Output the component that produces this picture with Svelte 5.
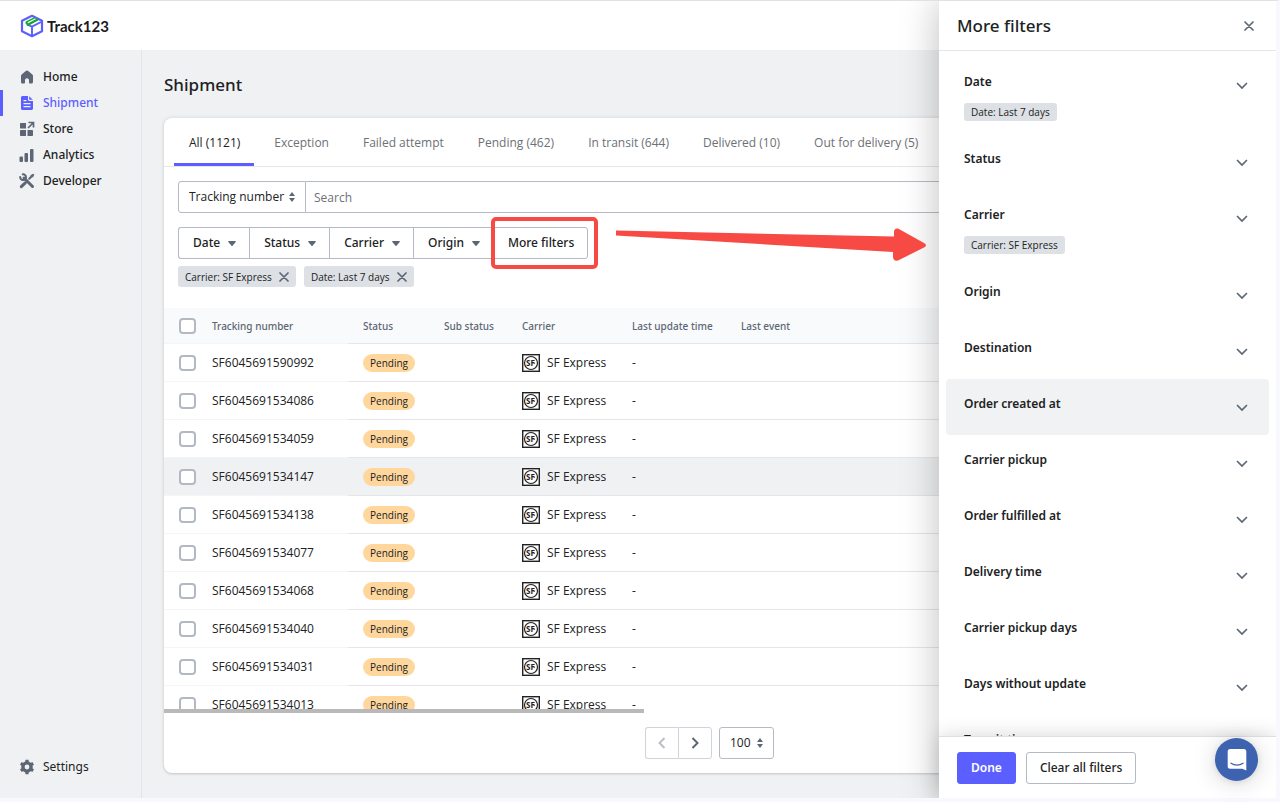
<script lang="ts">
	const nav = ["Home", "Shipment", "Store", "Analytics", "Developer"];
	const tabs = [
		"All (1121)",
		"Exception",
		"Failed attempt",
		"Pending (462)",
		"In transit (644)",
		"Delivered (10)",
		"Out for delivery (5)"
	];
	const filters = ["Date", "Status", "Carrier", "Origin"];
	const columns = ["Status", "Sub status", "Carrier", "Last update time", "Last event"];
	const numbers = [
		"SF6045691590992",
		"SF6045691534086",
		"SF6045691534059",
		"SF6045691534147",
		"SF6045691534138",
		"SF6045691534077",
		"SF6045691534068",
		"SF6045691534040",
		"SF6045691534031",
		"SF6045691534013"
	];
	const groups = [
		{ name: "Date", value: "Date: Last 7 days" },
		{ name: "Status" },
		{ name: "Carrier", value: "Carrier: SF Express" },
		{ name: "Origin" },
		{ name: "Destination" },
		{ name: "Order created at" },
		{ name: "Carrier pickup" },
		{ name: "Order fulfilled at" },
		{ name: "Delivery time" },
		{ name: "Carrier pickup days" },
		{ name: "Days without update" },
		{ name: "Transit time" }
	];

	let page = $state("Shipment");
	let tab = $state("All (1121)");
	let search = $state("");
	let chips = $state(["Carrier: SF Express", "Date: Last 7 days"]);
	let checked: string[] = $state([]);
	let hovered = $state("SF6045691534147");
	let group = $state("Order created at");
</script>

{#snippet sorter()}
	<svg class="sorter" width="6" height="10" viewBox="0 0 6 10"><path d="M3 0 6 4H0zM3 10 0 6h6z" /></svg>
{/snippet}

{#snippet cross()}
	<svg width="10" height="10" viewBox="0 0 10 10" fill="none" stroke="#5c6675" stroke-width="1.7" stroke-linecap="round">
		<path d="M1 1l8 8M9 1 1 9" />
	</svg>
{/snippet}

<div class="app">
	<header class="topbar">
		<a class="logo" href="#home">
			<svg width="24" height="24" viewBox="0 0 24 24" fill="none" stroke-linejoin="round">
				<path d="M12 1.800 22 6.800v10.400l-10 5-10-5V6.800z" stroke="#5c5fff" stroke-width="2.200" />
				<path d="M7 10.500l5 2.200 9-4.700M12 12.700v9" stroke="#5c5fff" stroke-width="1.900" />
				<path d="M6 8.200 8 10.800 18 5.200" stroke="#14a82c" stroke-width="2.200" />
				<path d="M6 8.200 14.500 3.800" stroke="#14a82c" stroke-width="1.500" />
			</svg>
			<span>Track123</span>
		</a>
	</header>

	<div class="body">
		<nav class="sidebar">
			{#each nav as item}
				<a href="#{item.toLowerCase()}" class:active={page === item} onclick={() => (page = item)}>
					<svg width="16" height="16" viewBox="0 0 16 16" fill="currentColor">
						{#if item === "Home"}
							<path d="M8 1.500c-.5 0-.9.2-1.200.5L2.600 5.600c-.4.4-.6.9-.6 1.400v6c0 .8.6 1.500 1.400 1.500h1.800c.5 0 .8-.4.8-.9v-2.400C6 10 6.900 9.200 8 9.200s2 .8 2 2v2.400c0 .5.3.9.8.9h1.800c.8 0 1.400-.7 1.400-1.500V7c0-.5-.2-1-.6-1.400L9.200 2c-.3-.3-.7-.5-1.200-.5z" />
						{:else if item === "Shipment"}
							<path fill-rule="evenodd" d="M3.500 1H9v3.500C9 5.300 9.700 6 10.500 6H14v7.500c0 .8-.7 1.500-1.500 1.500h-9C2.700 15 2 14.300 2 13.500v-11C2 1.700 2.700 1 3.500 1zM4.500 5v1.300h3V5zm0 3v1.300h7V8zm0 3v1.300h7V11z" />
							<path d="M10.200 1.200 13.800 4.800h-3c-.4 0-.6-.2-.6-.6z" />
						{:else if item === "Store"}
							<path d="M2 2h5v5.500H2c-.6 0-1-.4-1-1V3c0-.6.4-1 1-1zM2 9h5v6H2c-.6 0-1-.4-1-1v-4c0-.6.4-1 1-1zM8.500 9H13c.6 0 1 .4 1 1v4c0 .6-.4 1-1 1H8.500z" />
							<path d="M9 7l5-5M9.500 1.500h5V6.500" fill="none" stroke="currentColor" stroke-width="1.700" />
						{:else if item === "Analytics"}
							<rect x="0.500" y="9.500" width="3.500" height="5.500" rx="1" />
							<rect x="5.500" y="6" width="3.500" height="9" rx="1" />
							<rect x="11" y="2" width="3.500" height="13" rx="1" />
						{:else}
							<g fill="none" stroke="currentColor" stroke-linecap="round">
								<path d="M5 5l8.500 8.500" stroke-width="3" />
								<path d="M2.300 13.700 6.300 9.900" stroke-width="3" />
								<path d="M10.200 5.800 13.300 2.700" stroke-width="2" />
								<path d="M12.200 2.300 14.400 1.200l.4.4-1.100 2.200z" stroke-width="1" fill="currentColor" />
								<path d="M3.800 1.300A2.900 2.900 0 1 1 1.200 3.900" stroke-width="2" />
							</g>
						{/if}
					</svg>
					{item}
				</a>
			{/each}
			<a href="#settings" class="settings">
				<svg width="16" height="16" viewBox="0 0 16 16" fill="none" stroke="currentColor">
					<circle cx="8" cy="8" r="4.100" stroke-width="3.400" />
					<path stroke-width="3.200" d="M8 .8v2.500M8 12.700v2.500M1.800 4.400 4 5.700M12 10.300l2.200 1.300M1.800 11.600 4 10.300M12 5.700l2.200-1.300" />
				</svg>
				Settings
			</a>
		</nav>

		<main>
			<h1>Shipment</h1>
			<section class="card">
				<div class="tabs" role="tablist">
					{#each tabs as item}
						<button role="tab" aria-selected={tab === item} class:active={tab === item} onclick={() => (tab = item)}>
							{item}
						</button>
					{/each}
				</div>

				<div class="tools">
					<div class="search">
						<div class="select">
							<select aria-label="Search by">
								<option>Tracking number</option>
							</select>
							{@render sorter()}
						</div>
						<input type="text" aria-label="Search" placeholder="Search" bind:value={search} />
					</div>

					<div class="filters">
						{#each filters as item}
							<button>
								{item}
								<svg width="8" height="5" viewBox="0 0 8 5"><path d="M.8 0h6.400c.6 0 .9.6.5 1L4.500 4.700a.7.7 0 0 1-1 0L.3 1C-.1.6.2 0 .8 0z" fill="#5c6675" /></svg>
							</button>
						{/each}
						<div class="more">
							<button>More filters</button>
							<span class="callout"></span>
							<svg class="arrow" width="312" height="36" viewBox="0 0 312 36">
								<path d="M1 2.500 279 8.500V4q0-4 4-3.500L309 15q4 2 0 4.500L283 32.500q-5 1-5-4V24L1 7.500z" fill="#f84a45" />
							</svg>
						</div>
					</div>

					<div class="chips">
						{#each chips as chip}
							<span class="chip">
								{chip}
								<button aria-label="Remove {chip}" onclick={() => (chips = chips.filter((c) => c !== chip))}>
									{@render cross()}
								</button>
							</span>
						{/each}
					</div>
				</div>

				<div class="table-wrap">
					<table>
						<colgroup>
							<col class="c-check" />
							<col class="c-number" />
							<col class="c-status" />
							<col class="c-sub" />
							<col class="c-carrier" />
							<col class="c-time" />
							<col />
						</colgroup>
						<thead>
							<tr>
								<th><input type="checkbox" aria-label="Select all" /></th>
								<th>Tracking number</th>
								{#each columns as column}
									<th>{column}</th>
								{/each}
							</tr>
						</thead>
						<tbody>
							{#each numbers as number}
								<tr class:hovered={hovered === number} onmouseenter={() => (hovered = number)}>
									<td><input type="checkbox" aria-label="Select {number}" value={number} bind:group={checked} /></td>
									<td>{number}</td>
									<td><span class="badge">Pending</span></td>
									<td></td>
									<td>
										<div class="carrier">
											<svg width="18" height="18" viewBox="0 0 18 18">
												<rect x="0.700" y="0.700" width="16.600" height="16.600" fill="#fff" stroke="#222" stroke-width="1.400" />
												<circle cx="9" cy="9" r="6.500" fill="none" stroke="#222" stroke-width="1.200" />
												<text x="8.500" y="12" text-anchor="middle" font-size="8" font-weight="700" fill="#222">SF</text>
												<path d="M11.500 9.500h1.500" stroke="#e33" stroke-width="1.200" />
											</svg>
											SF Express
										</div>
									</td>
									<td>-</td>
									<td></td>
								</tr>
							{/each}
						</tbody>
					</table>
					<div class="scrollbar"></div>
				</div>

				<div class="pagination">
					<div class="pager">
						<button aria-label="Previous page" disabled>
							<svg width="8" height="12" viewBox="0 0 8 12"><path d="M6.500 1 1.500 6l5 5" /></svg>
						</button>
						<button aria-label="Next page">
							<svg width="8" height="12" viewBox="0 0 8 12"><path d="M1.500 1l5 5-5 5" /></svg>
						</button>
					</div>
					<div class="select size">
						<select aria-label="Rows per page">
							<option>100</option>
						</select>
						{@render sorter()}
					</div>
				</div>
			</section>
		</main>
	</div>

	<aside class="drawer">
		<div class="drawer-head">
			<h2>More filters</h2>
			<button aria-label="Close">{@render cross()}</button>
		</div>
		<div class="groups">
			{#each groups as item}
				<button class="group" class:current={group === item.name} onmouseenter={() => (group = item.name)}>
					<span>
						<span class="name">{item.name}</span>
						{#if item.value}
							<span class="tag">{item.value}</span>
						{/if}
					</span>
					<svg width="12" height="8" viewBox="0 0 12 8"><path d="M1.500 1.500 6 6l4.500-4.500" /></svg>
				</button>
			{/each}
		</div>
		<div class="drawer-foot">
			<button class="done">Done</button>
			<button class="clear">Clear all filters</button>
		</div>
	</aside>

	<button class="chat" aria-label="Open chat">
		<svg width="20" height="22" viewBox="0 0 20 22">
			<path d="M3 0h14c1.300 0 2.300 1 2.300 2.300V21.500l-4-1.700H3c-1.300 0-2.300-1-2.300-2.300V2.300C.7 1 1.700 0 3 0z" fill="#fff" />
			<path d="M4 14.200c3.500 2.600 8.500 2.600 12 0" fill="none" stroke="#3d63b0" stroke-width="1.300" stroke-linecap="round" />
		</svg>
	</button>
</div>

<style>
	:global(body) {
		margin: 0;
		background: #f8f9ff;
		overflow: hidden;
	}

	* {
		box-sizing: border-box;
	}

	.app {
		position: relative;
		display: flex;
		flex-direction: column;
		height: 100vh;
		border-top: 1px solid #dfe0e8;
		border-right: 4px solid #f8f9ff;
		border-bottom: 4px solid #f8f9ff;
		background: #f0f1f3;
		color: #202223;
		font-family: "Open Sans", "Noto Sans", sans-serif;
		font-size: 12px;
		line-height: 18px;
	}

	button,
	input,
	select {
		font: inherit;
		color: inherit;
		margin: 0;
	}

	button {
		border: 0;
		padding: 0;
		background: none;
		white-space: nowrap;
		cursor: pointer;
	}

	svg {
		display: block;
		flex: none;
	}

	/* Noto Sans has the medium cut that Open Sans lacks */
	h1,
	h2,
	.sidebar,
	.filters button,
	.name,
	.drawer-foot button {
		font-family: "Noto Sans", "Open Sans", sans-serif;
	}

	.topbar {
		display: flex;
		align-items: center;
		flex: none;
		height: 49px;
		padding-left: 20px;
		background: #fff;
	}

	.logo {
		display: flex;
		align-items: center;
		gap: 3px;
		color: #1c1c1c;
		font-family: Lato, sans-serif;
		font-size: 15px;
		font-weight: 700;
		text-decoration: none;
	}

	.body {
		display: flex;
		flex: 1;
		min-height: 0;
	}

	.sidebar {
		display: flex;
		flex-direction: column;
		flex: none;
		width: 142px;
		padding: 14px 0 18px;
		border-right: 1px solid #e2e5e9;
	}

	.sidebar a {
		display: flex;
		align-items: center;
		gap: 8px;
		height: 26px;
		padding-left: 16px;
		border-left: 3px solid transparent;
		color: #202223;
		font-weight: 500;
		text-decoration: none;
	}

	.sidebar a svg {
		color: #5c6675;
	}

	.sidebar a.active {
		border-color: #5c5fff;
		color: #5c5fff;
	}

	.sidebar a.active svg {
		color: #5c5fff;
	}

	.sidebar .settings {
		margin-top: auto;
		font-weight: 400;
	}

	main {
		display: flex;
		flex-direction: column;
		flex: 1;
		min-width: 0;
		padding: 23px 21px 25px 22px;
	}

	h1,
	h2 {
		margin: 0;
		font-size: 17px;
		font-weight: 500;
		line-height: 24px;
	}

	h1 {
		margin-bottom: 21px;
	}

	.card {
		display: flex;
		flex-direction: column;
		flex: 1;
		min-height: 0;
		border-radius: 8px;
		background: #fff;
		box-shadow: 0 0 4px rgba(23, 24, 24, 0.12), 0 1px 2px rgba(0, 0, 0, 0.12);
	}

	.tabs {
		display: flex;
		gap: 5px;
		flex: none;
		height: 49px;
		padding: 0 10px;
		border-bottom: 1px solid #e6e7ea;
	}

	.tabs button {
		padding: 5px 14px 0 15px;
		border-bottom: 3px solid transparent;
		color: #6d7175;
	}

	.tabs button.active {
		border-color: #5c5fff;
		color: #202223;
	}

	.tools {
		display: flex;
		flex-direction: column;
		flex: none;
		padding: 14px 14px 21px;
	}

	.search {
		display: flex;
		margin-bottom: 14px;
	}

	.select {
		position: relative;
		display: flex;
		align-items: center;
	}

	.select select {
		appearance: none;
		height: 32px;
		padding: 0 20px 0 10px;
		border: 1px solid #b5bbc5;
		border-radius: 3px 0 0 3px;
		background: #fff;
	}

	.sorter {
		position: absolute;
		right: 11px;
		fill: #5c6675;
		pointer-events: none;
	}

	.search input {
		flex: 1;
		height: 32px;
		padding: 0 8px;
		border: 1px solid #b5bbc5;
		border-left: 0;
		border-radius: 0 3px 3px 0;
	}

	.search input::placeholder {
		color: #6d7175;
		opacity: 1;
	}

	.filters {
		display: flex;
		margin-bottom: 7px;
	}

	.filters button {
		display: flex;
		align-items: center;
		gap: 8px;
		height: 32px;
		padding: 0 13px 0 14px;
		border: 1px solid #b5bbc5;
		border-right: 0;
		background: #fff;
		font-weight: 500;
	}

	.filters > button:first-child {
		border-radius: 3px 0 0 3px;
	}

	.more {
		position: relative;
	}

	.filters .more button {
		border-right: 1px solid #b5bbc5;
		border-radius: 0 3px 3px 0;
	}

	.callout {
		position: absolute;
		inset: -10px -10px -10px -2px;
		border: 4px solid #f84a45;
		border-radius: 5px;
		pointer-events: none;
	}

	.arrow {
		position: absolute;
		left: 122px;
		top: 1px;
		z-index: 3;
		pointer-events: none;
	}

	.chips {
		display: flex;
		gap: 8px;
	}

	.chip {
		display: flex;
		align-items: center;
		gap: 7px;
		height: 21px;
		padding: 0 7px;
		border-radius: 3px;
		background: #dde0e4;
		font-size: 10px;
	}

	.table-wrap {
		position: relative;
		flex: 1;
		min-height: 0;
		overflow: hidden;
	}

	table {
		width: 100%;
		table-layout: fixed;
		border-collapse: separate;
		border-spacing: 0;
	}

	.c-check {
		width: 33px;
	}

	.c-number {
		width: 151px;
	}

	.c-status {
		width: 81px;
	}

	.c-sub {
		width: 78px;
	}

	.c-carrier {
		width: 110px;
	}

	.c-time {
		width: 109px;
	}

	th,
	td {
		height: 38px;
		padding: 0 0 0 15px;
		border-bottom: 1px solid #e4e6e9;
		text-align: left;
		white-space: nowrap;
	}

	th {
		height: 36px;
		background: #f9fafb;
		color: #5c6675;
		font-family: "Noto Sans", "Open Sans", sans-serif;
		font-size: 10px;
		font-weight: 500;
	}

	th:nth-child(-n + 2),
	td:nth-child(-n + 2) {
		border-color: #f4f5f6;
	}

	tr.hovered td {
		background: #f0f1f3;
	}

	input[type="checkbox"] {
		appearance: none;
		display: block;
		width: 17px;
		height: 16px;
		border: 2px solid #b3b9c4;
		border-radius: 4px;
		background: #fff;
	}

	input[type="checkbox"]:checked {
		background: #5c5fff;
	}

	.badge {
		display: block;
		width: fit-content;
		padding: 0 7px;
		border-radius: 9px;
		background: #ffd79d;
		font-size: 10px;
	}

	.carrier {
		display: flex;
		align-items: center;
		gap: 7px;
	}

	.scrollbar {
		position: absolute;
		left: 0;
		bottom: 0;
		width: 44%;
		height: 4px;
		background: #b9b9b9;
	}

	.pagination {
		display: flex;
		justify-content: center;
		gap: 7px;
		flex: none;
		padding: 14px;
	}

	.pager {
		display: flex;
	}

	.pager button {
		display: flex;
		align-items: center;
		justify-content: center;
		width: 34px;
		height: 32px;
		border: 1px solid #d0d4da;
		border-radius: 0 3px 3px 0;
	}

	.pager button:first-child {
		width: 33px;
		border-right: 0;
		border-radius: 3px 0 0 3px;
	}

	.pager path {
		fill: none;
		stroke: #5c6675;
		stroke-width: 2;
	}

	.pager button:disabled path {
		stroke: #b9bec7;
	}

	.size select {
		padding-right: 22px;
		border-radius: 3px;
	}

	.drawer {
		position: absolute;
		top: 0;
		right: 0;
		bottom: 0;
		z-index: 2;
		display: flex;
		flex-direction: column;
		width: 337px;
		background: #fff;
		box-shadow: 0 0 36px rgba(0, 0, 0, 0.26);
		clip-path: inset(0 0 0 -60px);
	}

	.drawer-head {
		display: flex;
		align-items: center;
		justify-content: space-between;
		flex: none;
		height: 50px;
		padding: 0 22px 0 18px;
		border-bottom: 1px solid #e6e7ea;
	}

	.groups {
		flex: 1;
		min-height: 0;
		padding: 6px 7px 0;
		overflow: hidden;
	}

	.group {
		display: flex;
		align-items: flex-start;
		justify-content: space-between;
		width: 100%;
		min-height: 56px;
		padding: 16px 21px 13px 18px;
		border-radius: 4px;
		text-align: left;
	}

	.group.current {
		background: #f1f2f3;
	}

	.group svg {
		margin-top: 9px;
	}

	.group path {
		fill: none;
		stroke: #5c6675;
		stroke-width: 1.7;
		stroke-linecap: round;
	}

	.name {
		display: block;
		font-weight: 600;
	}

	.tag {
		display: block;
		width: fit-content;
		margin-top: 12px;
		padding: 0 7px;
		border-radius: 3px;
		background: #dde0e4;
		font-size: 10px;
	}

	.drawer-foot {
		display: flex;
		align-items: center;
		gap: 10px;
		flex: none;
		height: 62px;
		padding: 0 18px;
		border-top: 1px solid #dddfe4;
		box-shadow: 0 0 20px rgba(0, 0, 0, 0.16);
		background: #fff;
	}

	.done,
	.clear {
		height: 32px;
		padding: 0 13px;
		border: 1px solid #b5bbc5;
		border-radius: 3px;
		font-weight: 500;
	}

	.done {
		border-color: #5c5fff;
		background: #5c5fff;
		color: #fff;
		font-weight: 600;
	}

	.chat {
		position: absolute;
		right: 18px;
		bottom: 17px;
		z-index: 4;
		display: flex;
		align-items: center;
		justify-content: center;
		width: 43px;
		height: 43px;
		border-radius: 50%;
		background: #3d63b0;
		box-shadow: 0 1px 6px rgba(0, 0, 0, 0.1), 0 2px 24px rgba(0, 0, 0, 0.16);
	}
</style>
